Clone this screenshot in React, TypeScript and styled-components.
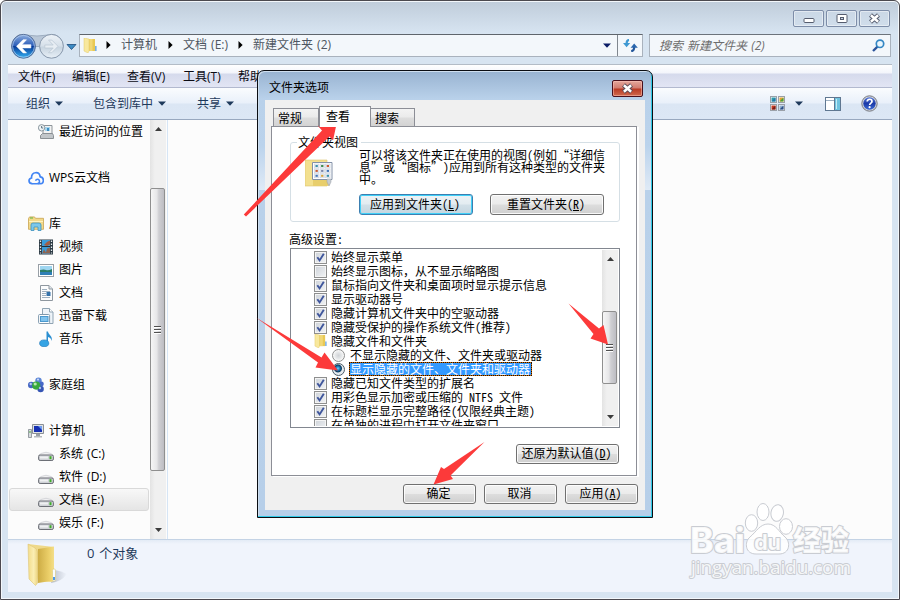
import React from 'react';
import styled, { createGlobalStyle, css } from 'styled-components';

const GlobalStyle = createGlobalStyle`
  *, *::before, *::after { box-sizing: border-box; }
  html, body { margin: 0; padding: 0; }
  body {
    width: 900px;
    height: 600px;
    overflow: hidden;
    background: #fff;
    font-family: "Open Sans", "Noto Sans CJK SC", sans-serif;
    font-size: 12px;
    line-height: 16px;
    word-spacing: 1px;
    color: #000;
  }
  svg { display: block; flex: none; }
`;

/* ---------- Explorer window ---------- */

const Explorer = styled.div`
  position: relative;
  width: 900px;
  height: 600px;
  display: flex;
  flex-direction: column;
  border: 1px solid #4b494f;
  border-radius: 6px 6px 0 0;
  box-shadow: inset 0 0 0 1px #f3f7fb;
  background: linear-gradient(#bfccda 0, #d7e4f1 32px, #d7e4f1 100%);
  padding: 0 7px 7px;
  overflow: hidden;
`;

const Caption = styled.div`
  height: 33px;
  display: flex;
  justify-content: flex-end;
  gap: 2px;
  padding: 9px 2px 0 0;
`;

const CaptionButton = styled.div`
  width: 31px;
  height: 17px;
  display: flex;
  align-items: center;
  justify-content: center;
  border: 1px solid #7d8da8;
  border-radius: 2px;
  box-shadow: inset 0 0 0 1px rgba(255, 255, 255, 0.45);
  background: rgba(205, 219, 233, 0.5);
`;

const NavRow = styled.div`
  height: 30px;
  flex: none;
  display: flex;
  align-items: flex-start;
  padding-right: 1px;
`;

const NavButtons = styled.div`
  width: 71px;
  height: 26px;
  flex: none;
  margin-top: -1px;
`;

const AddressBar = styled.div`
  width: 564px;
  height: 23px;
  display: flex;
  align-items: center;
  border: 1px solid #a9b2bd;
  border-top-color: #5f656c;
  background: #f3f7fb;
  color: #4e5661;
  margin-right: 6px;
`;

const FolderSlot = styled.div`
  width: 26px;
  padding-left: 3px;
`;

const Crumb = styled.div<{ $w: number }>`
  width: ${(p) => p.$w}px;
  display: flex;
  align-items: center;
  gap: 10px;
  white-space: nowrap;
  line-height: 20px;
  padding-bottom: 1px;
`;

const DropSlot = styled.div`
  margin-left: auto;
  width: 14px;
`;

const RefreshSlot = styled.div`
  width: 25px;
  height: 21px;
  display: flex;
  align-items: center;
  justify-content: center;
  border-left: 1px solid #80878f;
`;

const SearchBox = styled.div`
  width: 242px;
  height: 23px;
  display: flex;
  align-items: center;
  justify-content: space-between;
  padding: 0 5px 0 9px;
  border: 1px solid #a9b2bd;
  border-top-color: #6c737b;
  background: #f3f7fb;
  color: #6d6d6d;
  font-style: italic;
`;

const MenuBar = styled.div`
  height: 24px;
  flex: none;
  display: flex;
  align-items: center;
  padding-left: 10px;
  border-top: 1px solid #b3bcc7;
  border-bottom: 1px solid #b2b9cf;
  background: linear-gradient(#ffffff 0, #f3f5fb 8px, #d5daec 9px, #e2e5f4 100%);
`;

const MenuItem = styled.div`
  width: 55px;
  white-space: nowrap;
  color: #0b0b14;
  padding-top: 1px;
  &:nth-child(1) { width: 54px; }
  &:nth-child(3) { width: 56px; }
`;

const Toolbar = styled.div`
  height: 32px;
  flex: none;
  display: flex;
  align-items: center;
  padding: 0 14px 0 18px;
  border-bottom: 1px solid #98a8bf;
  background: linear-gradient(#fafcfe 0, #e9f0fa 15px, #dbe6f4 16px, #dce7f5 100%);
  color: #1e395b;
`;

const ToolItem = styled.div<{ $gap: number }>`
  display: flex;
  align-items: center;
  gap: 5px;
  margin-right: ${(p) => p.$gap}px;
`;

const ToolRight = styled.div`
  margin-left: auto;
  display: flex;
  align-items: center;
`;

const Spacer = styled.div<{ $w: number }>`
  width: ${(p) => p.$w}px;
`;

const Body = styled.div`
  height: 419px;
  flex: none;
  display: flex;
  background: #fcfcfc;
`;

const Sidebar = styled.div`
  width: 142px;
  flex: none;
  overflow: hidden;
`;

const TreeRow = styled.div<{ $level: number; $active?: boolean }>`
  height: 23px;
  width: 140px;
  margin-left: 1px;
  display: flex;
  align-items: center;
  padding-left: ${(p) => (p.$level === 2 ? 28 : 18)}px;
  gap: 5px;
  border: 1px solid transparent;
  border-radius: 3px;
  white-space: nowrap;
  ${(p) =>
    p.$active &&
    css`
      border-color: #d9d9d9;
      background: linear-gradient(#f8f8f8, #e5e5e5);
    `}
`;

const ScrollTrack = styled.div`
  width: 16px;
  flex: none;
  display: flex;
  flex-direction: column;
  align-items: center;
  background: linear-gradient(90deg, #e3e3e3, #f0f0f0 30%, #f0f0f0);
`;

const ScrollEnd = styled.div<{ $h: number; $down?: boolean }>`
  height: ${(p) => p.$h}px;
  display: flex;
  align-items: ${(p) => (p.$down ? 'flex-end' : 'flex-start')};
  padding: 7px 0;
`;

const ScrollThumb = styled.div<{ $h: number }>`
  width: 15px;
  height: ${(p) => p.$h}px;
  align-self: flex-start;
  display: flex;
  align-items: center;
  justify-content: center;
  border: 1px solid #8f8f8f;
  border-radius: 2px;
  background: linear-gradient(90deg, #f6f6f6 0, #e6e6e8 45%, #cfcfd3 60%, #bdbdc3 100%);
`;

const FileArea = styled.div`
  flex: 1;
  margin-left: 1px;
  border-left: 1px solid #d6e5f5;
`;

const StatusBar = styled.div`
  height: 53px;
  flex: none;
  display: flex;
  padding: 3px 0 0 19px;
  border-top: 1px solid #c4d3e5;
  background: linear-gradient(#e3ebf6 0, #f0f4fc 4px, #f0f4fc 100%);
  color: #1e395b;
  font-size: 13px;
  line-height: 20px;
`;

const StatusText = styled.div`
  margin-left: 18px;
  word-spacing: 1.5px;
`;

/* ---------- Folder options dialog ---------- */

const Dialog = styled.div`
  position: absolute;
  left: 256px;
  top: 69px;
  width: 396px;
  height: 448px;
  padding: 0 7px 7px;
  display: flex;
  flex-direction: column;
  word-spacing: 0;
  border: 1px solid #0a0d12;
  border-radius: 7px 7px 0 0;
  box-shadow: inset -1px -1px 0 #2fc9e6, inset 1px 1px 0 #cfdfef;
  background:
    linear-gradient(#b9d1ea, #b7cfe9) 0 119px / 100% 328px no-repeat,
    linear-gradient(#98b3d1 0, #b9d1ea 28px, #bbd3ec 75px, #dfeaf6 119px);
`;

const DialogTitle = styled.div`
  height: 29px;
  flex: none;
  display: flex;
  justify-content: space-between;
  padding: 9px 2px 0 4px;
`;

const CloseButton = styled.div`
  width: 31px;
  height: 17px;
  display: flex;
  align-items: center;
  justify-content: center;
  border: 1px solid #48101c;
  border-radius: 2px;
  box-shadow: inset 0 0 0 1px rgba(255, 200, 190, 0.5);
  background: linear-gradient(#e3a79c 0, #d27c70 7px, #b93a24 8px, #cf6a4e 100%);
`;

const Client = styled.div`
  width: 380px;
  height: 410px;
  padding: 6px 6px 0;
  background: #f0f0f0;
  font-family: "Noto Sans CJK SC", sans-serif;
  font-feature-settings: "hwid" 1;
  line-height: 14px;
`;

const FullWidth = styled.span`
  font-feature-settings: normal;
`;

const Tabs = styled.div`
  height: 20px;
  display: flex;
  align-items: flex-end;
  padding-left: 2px;
`;

const Tab = styled.div<{ $w: number; $active?: boolean }>`
  width: ${(p) => p.$w}px;
  height: 18px;
  padding: 2px 0 0 4px;
  border: 1px solid #8c8e96;
  border-bottom: 0;
  border-left-width: ${(p) => (p.$w === 44 ? 0 : 1)}px;
  background: linear-gradient(#f3f3f3 0, #ebebeb 8px, #dddddd 9px, #d3d3d3 100%);
  ${(p) =>
    p.$active &&
    css`
      height: 21px;
      margin-bottom: -1px;
      padding-left: 6px;
      background: #fff;
      z-index: 1;
    `}
`;

const Panel = styled.div`
  width: 366px;
  height: 350px;
  padding: 15px 17px 0 18px;
  border: 1px solid #8c8e96;
  box-shadow: 2px 2px 0 -1px #fff, 2px 1px 0 #fff;
  background: #fff;
`;

const Group = styled.div`
  width: 330px;
  height: 80px;
  border: 1px solid #d5dfe5;
  border-radius: 3px;
`;

const GroupLabel = styled.div`
  width: 64px;
  margin: -8px 0 0 6px;
  padding-left: 1px;
  background: #fff;
  height: 14px;
`;

const GroupBody = styled.div`
  display: flex;
  padding: 0 0 0 14px;
`;

const GroupIcon = styled.div`
  width: 28px;
  padding-top: 10px;
`;

const GroupText = styled.div`
  width: 256px;
  margin-left: 26px;
`;

const Paragraph = styled.div`
  line-height: 12px;
  white-space: pre;
  height: 45px;
`;

const ButtonRow = styled.div<{ $gap: number; $pad?: string }>`
  display: flex;
  justify-content: flex-end;
  gap: ${(p) => p.$gap}px;
  padding: ${(p) => p.$pad ?? '0'};
`;

const Button = styled.div<{ $w: number; $h?: number; $focus?: boolean }>`
  width: ${(p) => p.$w}px;
  height: ${(p) => p.$h ?? 20}px;
  display: flex;
  align-items: center;
  justify-content: center;
  padding: 0 2px 2px 0;
  white-space: nowrap;
  border: 1px solid #707070;
  border-radius: 3px;
  box-shadow: inset 0 0 0 1px rgba(255, 255, 255, 0.85);
  background: linear-gradient(#f2f2f2 0, #ebebeb 48%, #dddddd 52%, #cfcfcf 100%);
  ${(p) =>
    p.$focus &&
    css`
      border-color: #3c7fb1;
      box-shadow: inset 0 0 0 1px #40d0f8;
      background: linear-gradient(#edf3f6 0, #e3ecf1 48%, #d2e0e8 52%, #c4d6e0 100%);
    `}
`;

const Key = styled.span`
  text-decoration: underline;
  text-underline-offset: 1px;
`;

const SectionLabel = styled.div`
  margin: 10px 0 2px -1px;
  height: 14px;
`;

const ListBox = styled.div`
  width: 330px;
  height: 180px;
  display: flex;
  border: 1px solid #828790;
  background: #fff;
  overflow: hidden;
  padding: 1px;
`;

const List = styled.div`
  width: 311px;
  height: 176px;
  overflow: hidden;
`;

const Option = styled.div<{ $indent: number }>`
  height: 14px;
  display: flex;
  align-items: center;
  gap: 4px;
  padding-left: ${(p) => p.$indent}px;
  white-space: pre;
`;

const OptionText = styled.span<{ $selected?: boolean }>`
  height: 14px;
  line-height: 14px;
  ${(p) =>
    p.$selected &&
    css`
      line-height: 12px;
      margin-left: -1px;
      padding-right: 1px;
      color: #fff;
      background: #3399ff;
      border: 1px solid #cc6600;
      outline: 1px dotted #1c1206;
      outline-offset: -1px;
    `}
`;

const Check = styled.div`
  width: 13px;
  height: 13px;
  flex: none;
  border: 1px solid #8e8f8f;
  box-shadow: inset 0 0 0 1px #f4f4f4;
  background: linear-gradient(135deg, #cdd2d8, #f2f4f6);
`;

const Radio = styled.div<{ $on: boolean }>`
  width: 13px;
  height: 13px;
  flex: none;
  margin-left: -1px;
  margin-right: 1px;
  border-radius: 50%;
  border: 1px solid ${(p) => (p.$on ? '#4b5a66' : '#8e8f8f')};
  background: ${(p) =>
    p.$on
      ? 'radial-gradient(circle at 45% 40%, #7fd6f8 0, #1c78b4 2px, #0d3a5e 3.5px, #e4eaee 4.5px)'
      : 'radial-gradient(circle at 50% 50%, #d0d3d6 0, #e4e6e8 3px, #f6f6f6 5px)'};
`;

const Overlay = styled.div`
  position: absolute;
  left: -1px;
  top: -1px;
  width: 900px;
  height: 600px;
  pointer-events: none;
`;

/* ---------- Small drawings ---------- */

const Caret = ({ fill = '#1e395b' }: { fill?: string }) => (
  <svg width="8" height="5" viewBox="0 0 8 5"><path d="M0 .5h8L4 4.7z" fill={fill} /></svg>
);

const CrumbArrow = () => (
  <svg width="5" height="8" viewBox="0 0 5 8"><path d="M.5 0v8L4.6 4z" fill="#000" /></svg>
);

const ScrollArrow = ({ down }: { down?: boolean }) => (
  <svg width="7" height="4" viewBox="0 0 7 4">
    <path d={down ? 'M0 0h7L3.5 4z' : 'M0 4h7L3.5 0z'} fill="#3c3c3c" />
  </svg>
);

const Grip = () => (
  <svg width="7" height="9" viewBox="0 0 7 9" shapeRendering="crispEdges">
    <path d="M0 1h7v1H0zM0 4h7v1H0zM0 7h7v1H0z" fill="#505050" />
    <path d="M0 2h7v1H0zM0 5h7v1H0zM0 8h7v1H0z" fill="#fff" />
  </svg>
);

const Cross = ({ stroke }: { stroke: string }) => (
  <svg width="13" height="11" viewBox="0 0 13 11">
    <path d="M2.500 2l8 7M10.500 2l-8 7" stroke={stroke} strokeWidth="4.400" />
    <path d="M2.900 2.300l7.200 6.400M10.100 2.300l-7.200 6.400" stroke="#fff" strokeWidth="2.500" />
  </svg>
);

const MinGlyph = () => (
  <svg width="12" height="11" viewBox="0 0 12 11"><rect x="1" y="5.500" width="10" height="4" rx="1" fill="#fff" stroke="#555c6e" /></svg>
);

const MaxGlyph = () => (
  <svg width="12" height="9" viewBox="0 0 12 9">
    <rect x="1" y=".5" width="10" height="8" rx="1" fill="#fff" stroke="#555c6e" />
    <rect x="4.500" y="3.500" width="3" height="2" fill="#c6d3e0" stroke="#555c6e" />
  </svg>
);

const NavGlyphs = () => (
  <svg width="71" height="26" viewBox="8 33 71 26">
    <defs>
      <linearGradient id="navBack" x1="0" y1="0" x2="0" y2="1">
        <stop offset="0" stopColor="#8eaede" /><stop offset=".48" stopColor="#2a5cb8" />
        <stop offset=".5" stopColor="#083a98" /><stop offset="1" stopColor="#35b4f4" />
      </linearGradient>
      <linearGradient id="navFwd" x1="0" y1="0" x2="0" y2="1">
        <stop offset="0" stopColor="#eef3f8" /><stop offset=".5" stopColor="#d5dfe9" />
        <stop offset=".52" stopColor="#c6d3df" /><stop offset="1" stopColor="#e8f0f7" />
      </linearGradient>
    </defs>
    <path d="M20 34.500q17 3 34 0a12 12 0 0 1 9 12H12a12 12 0 0 1 8-12z" fill="#b9c7d7" stroke="#9dadc0" />
    <circle cx="23.500" cy="46.300" r="11.900" fill="url(#navBack)" stroke="#566f98" />
    <circle cx="23.500" cy="46.300" r="10.900" fill="none" stroke="#b9d2f2" strokeOpacity=".7" />
    <path d="M16.500 46.300l6.600-6.600h3.400l-4.600 5h9v3.200h-9l4.600 5h-3.400z" fill="#fff" stroke="#fff" strokeWidth=".6" />
    <circle cx="51.500" cy="46.300" r="11.900" fill="url(#navFwd)" stroke="#8797ab" />
    <path d="M58 46.300l-6.200-6.200h-3.200l4.600 4.900h-8.400v3h8.400l-4.600 4.700h3.200z" fill="#e8eef4" stroke="#bdc9d5" strokeWidth=".8" />
    <path d="M67 44.500h9l-4.500 5z" fill="#3c8bc4" stroke="#1d4b7c" strokeWidth=".8" />
  </svg>
);

const SmallFolder = ({ size = 14 }: { size?: number }) => (
  <svg width={size} height={size + 1} viewBox="0 0 14 15">
    <path d="M5 1h7v12H5z" fill="#e9c955" />
    <path d="M1 0l5 1v12l-1 2-4-2z" fill="#f8e89d" stroke="#e3c968" strokeWidth=".5" />
    <path d="M6.500 1h3v12h-3z" fill="#f1d878" />
    <path d="M12 8h1.600v5H12z" fill="#77aee6" />
  </svg>
);

const RefreshGlyph = () => (
  <svg width="15" height="13" viewBox="0 0 15 13">
    <path d="M6 1Q3.600 1.200 3.600 4.600" fill="none" stroke="#3d98d2" strokeWidth="2.200" />
    <path d="M0 4h7.200L3.600 8.200z" fill="#3d98d2" />
    <path d="M8.200 12.200q3-.4 3-4.500" fill="none" stroke="#23569a" strokeWidth="2.200" />
    <path d="M7.600 8.800h7.200l-3.600-4.400z" fill="#2a66ad" />
  </svg>
);

const Magnifier = () => (
  <svg width="13" height="13" viewBox="0 0 13 13">
    <path d="M6 7.200L1 12" stroke="#2b539a" strokeWidth="2.400" />
    <circle cx="8" cy="4.800" r="3.700" fill="#eaf6fd" stroke="#3487c4" strokeWidth="1.700" />
  </svg>
);

const ViewsGlyph = () => (
  <svg width="15" height="15" viewBox="0 0 15 15">
    {[[0, 0, '#2e9cab', '#2277a8'], [8, 0, '#dfa132', '#4aa03c'], [0, 8, '#c8391e', '#751d1a'], [8, 8, '#8fb0cf', '#2d4f86']].map(
      ([x, y, a, b]) => (
        <g key={`${x}-${y}`}>
          <rect x={Number(x) + 0.5} y={Number(y) + 0.5} width="6" height="6" fill="#fff" stroke="#9aa0a8" />
          <path d={`M${Number(x) + 1.5} ${Number(y) + 1.5}h4v4h-4z`} fill={String(a)} />
          <path d={`M${Number(x) + 1.5} ${Number(y) + 5.5}l4-4v4z`} fill={String(b)} />
        </g>
      ),
    )}
  </svg>
);

const PaneGlyph = () => (
  <svg width="16" height="14" viewBox="0 0 16 14">
    <rect x=".5" y=".5" width="15" height="13" fill="#fff" stroke="#5f7791" />
    <path d="M1 3.500h9" stroke="#9db0c2" /><rect x="10" y="1" width="5" height="12" fill="#6fc3df" />
    <path d="M9.500 1v12" stroke="#5f7791" /><path d="M11.500 2v10" stroke="#c5ecf6" />
  </svg>
);

const HelpGlyph = () => (
  <svg width="17" height="17" viewBox="0 0 17 17">
    <defs>
      <linearGradient id="helpBlue" x1="0" y1="0" x2="0" y2="1">
        <stop offset="0" stopColor="#5a7bd8" /><stop offset=".5" stopColor="#1b3aa8" /><stop offset="1" stopColor="#3b6ad4" />
      </linearGradient>
    </defs>
    <circle cx="8.500" cy="8.500" r="7.700" fill="#d0d3da" stroke="#777a82" />
    <circle cx="8.500" cy="8.500" r="6.200" fill="url(#helpBlue)" />
    <path d="M6.200 6.600c0-3.200 4.800-3 4.800-.2 0 1.800-2.300 1.700-2.300 3.600" fill="none" stroke="#fff" strokeWidth="1.700" />
    <circle cx="8.600" cy="12.200" r="1.100" fill="#fff" />
  </svg>
);

type IconName =
  | 'recent' | 'cloud' | 'library' | 'video' | 'picture' | 'doc' | 'download'
  | 'music' | 'home' | 'computer' | 'drive';

const icons: Record<IconName, React.ReactNode> = {
  recent: (
    <>
      <path d="M5 1.500h9v9H5z" fill="#f3f3f3" stroke="#8d9499" />
      <path d="M7 3h5v4H7z" fill="#a8d6ee" /><path d="M9 4h2v3H9z" fill="#3c8fc5" />
      <path d="M2.500 11.500l2-2h10l1 2v3h-13z" fill="#c2c6c9" stroke="#8b9094" />
      <circle cx="3.600" cy="3.800" r="3.200" fill="#eff3f5" stroke="#8a979f" />
      <path d="M3.600 2v2h1.600" fill="none" stroke="#4f6877" strokeWidth=".9" />
    </>
  ),
  cloud: (
    <>
      <path d="M4.200 13.700C.4 13.700-.1 8.800 3.500 8 3.300 1.400 11.400 1 12.200 6.800c4 .2 4.300 6.900.4 6.900H9.800" fill="none" stroke="#4285f4" strokeWidth="1.700" />
      <path d="M3.800 13.700h5.400c3 0 3-4.400.4-4.400-1 0-1.800.6-2 1.400" fill="none" stroke="#4285f4" strokeWidth="1.500" />
    </>
  ),
  library: (
    <>
      <path d="M.5 2.500l1-1.600h5l1 1.400h8v11H.5z" fill="#f2d98a" stroke="#c9a550" strokeWidth=".8" />
      <path d="M1 5h14v1H1z" fill="#fff3c0" /><path d="M2 1.400h3v1H2z" fill="#5bb545" />
      <path d="M3 14.500V9q0-2 2-2h6q2 0 2 2v5.500h-3V11H6v3.500z" fill="#7cc8ea" stroke="#3d92be" strokeWidth=".8" />
    </>
  ),
  video: (
    <>
      <path d="M1 .5h14v15H1z" fill="#2c3a44" /><path d="M4 1h8v14H4z" fill="#3b9cd8" />
      <path d="M9 3l3-1.500v4L9 7 6 6z" fill="#a35d42" /><path d="M4 14.500l2-4 2 3 1-4 3-1v6z" fill="#8f6450" />
      <path d="M4 7.500h8" stroke="#20303a" />
      <path d="M2.500 1.500v13M13.500 1.500v13" stroke="#e7eef2" strokeWidth="1.300" strokeDasharray="1.500 1.500" />
    </>
  ),
  picture: (
    <>
      <rect x=".5" y="2.500" width="15" height="12" fill="#fff" stroke="#989fa6" />
      <path d="M2 4h12v9H2z" fill="#9fd6f1" /><path d="M2 8q4-1 6 0t6-1v3H2z" fill="#2b7d68" />
      <path d="M2 10h12v3H2z" fill="#2f7fb6" />
    </>
  ),
  doc: (
    <>
      <path d="M2.500.500H11L14.500 4v11.500h-12z" fill="#fbfcfd" stroke="#8e979f" />
      <path d="M11 .5V4h3.500" fill="#dfe6ec" stroke="#8e979f" />
      <path d="M4 4.500h5M4 6.500h8M4 8.500h4M4 10.500h4M4 12.500h8" stroke="#9fb0bf" />
      <path d="M8.500 7h4v4h-4z" fill="#3573ab" />
    </>
  ),
  download: (
    <>
      <path d="M4.500.500h7L15 4v11.500H4.500z" fill="#eef4f9" stroke="#90a4b3" />
      <path d="M11.500.5V4H15" fill="#fff" stroke="#90a4b3" />
      <rect x=".6" y="6.500" width="11" height="9" rx="1" fill="#fff" stroke="#7f99ad" />
      <rect x="2.500" y="8.500" width="7.500" height="5" fill="#7fc3ee" stroke="#4b98cd" />
    </>
  ),
  music: (
    <>
      <path d="M8.500.5H10c.4 3.400 5.200 4.500 3.600 9.600-.2-2.700-1.800-3.800-3.600-4.200V13H8.500z" fill="#2b8fd1" />
      <ellipse cx="6.200" cy="12.300" rx="4.600" ry="3.400" fill="#36a4e4" stroke="#1b74b5" strokeWidth=".6" />
    </>
  ),
  home: (
    <>
      <circle cx="3.200" cy="8" r="3.200" fill="#4467c4" /><circle cx="10.500" cy="3.600" r="3.200" fill="#5d86d6" />
      <circle cx="12.600" cy="12" r="3.200" fill="#3655b4" /><circle cx="13.400" cy="7" r="2.400" fill="#4668c8" />
      <circle cx="8.200" cy="8.600" r="4.100" fill="#38a83d" /><circle cx="7.200" cy="7" r="1.600" fill="#b6e8ae" />
      <circle cx="2.700" cy="7" r="1.200" fill="#b8c8f0" /><circle cx="12" cy="11" r="1.200" fill="#a8bcec" />
      <circle cx="10" cy="2.600" r="1.100" fill="#c4d5f4" />
    </>
  ),
  computer: (
    <>
      <path d="M.5 6.500h3v8h-3z" fill="#d6dade" stroke="#82898f" strokeWidth=".8" /><path d="M1 9h2" stroke="#4ca640" />
      <path d="M4.500 1.500h11v9h-11z" fill="#dfe2e6" stroke="#8b9095" />
      <path d="M6 3h8v6H6z" fill="#1630b2" /><path d="M10 3h4v4z" fill="#6f9df0" />
      <path d="M8 11h4v2H8z" fill="#9aa0a5" /><path d="M6 13h8v1.500H6z" fill="#b4b9bd" />
    </>
  ),
  drive: (
    <>
      <path d="M3 7.500q5-2.500 10 0l2.500 2H.5z" fill="#f0f0f2" stroke="#c3c5c9" strokeWidth=".6" />
      <rect x=".6" y="9" width="14.800" height="5.500" rx="1.500" fill="#cfd1d6" stroke="#6c6f76" />
      <path d="M2 10.500h8v2H2z" fill="#eff0f2" /><path d="M11.500 10.200h2v3h-2z" fill="#3fae2a" />
    </>
  ),
};

const TreeIcon = ({ name }: { name: IconName }) => (
  <svg width="16" height="16" viewBox="0 0 16 16">{icons[name]}</svg>
);

const OpenFolder = () => (
  <svg width="42" height="44" viewBox="0 0 42 44">
    <defs>
      <linearGradient id="folderBack" x1="0" x2="1"><stop offset="0" stopColor="#cdac45" /><stop offset=".7" stopColor="#ecd06a" /><stop offset="1" stopColor="#f3de8a" /></linearGradient>
      <linearGradient id="folderFront" x1="0" x2="1"><stop offset="0" stopColor="#f3dc8a" /><stop offset=".6" stopColor="#fbeeb4" /><stop offset="1" stopColor="#ecd481" /></linearGradient>
      <linearGradient id="folderShade" x1="0" x2="1"><stop offset="0" stopColor="#a9b0bd" /><stop offset="1" stopColor="#f0f4fc" /></linearGradient>
    </defs>
    <path d="M24 40q10-1 16-9-6-3-12-4z" fill="url(#folderShade)" opacity=".8" />
    <path d="M1 1l26 3v33l-2 2-14-1z" fill="#efd98a" />
    <path d="M11 6l16-2.500v34L11 40z" fill="url(#folderBack)" />
    <path d="M1 1l7 4q2 1 2.500 4v31l-2 2.500L2 36z" fill="url(#folderFront)" stroke="#dec679" strokeWidth=".6" />
    <rect x="25.500" y="26" width="3" height="12" rx="1.200" fill="#f7fbff" stroke="#d9c260" strokeWidth=".5" />
    <path d="M26 34h2v3h-2z" fill="#4e9be8" />
  </svg>
);

const ViewFolder = () => (
  <svg width="28" height="28" viewBox="0 0 28 28">
    <path d="M0 1h22v26H0z" fill="#f3e08f" stroke="#dcc46e" strokeWidth=".6" />
    <path d="M8 20h17v6l-3 1H8z" fill="#e8ce6c" />
    <path d="M7.500 3.500h19.500v17h-19.500z" fill="#fff" stroke="#8391a8" />
    {[0, 1, 2].map((r) =>
      [0, 1, 2].map((c) => (
        <g key={`${r}${c}`}>
          <rect x={9.500 + c * 5.600} y={5 + r * 4.900} width="4.400" height="4" fill="#e9eef5" stroke="#c3cbd6" strokeWidth=".5" />
          <rect x={10.500 + c * 5.600} y={6 + r * 4.900} width="2.300" height="2" fill={['#3a8fa8', '#3e8a4e', '#c95a32', '#7b86a8', '#4273b5', '#d9a43a'][(r * 2 + c) % 6]} />
        </g>
      )),
    )}
    <path d="M22 20h4v3l-2 4-2-4z" fill="#c6ccd2" stroke="#969da4" strokeWidth=".5" />
  </svg>
);

const CheckBox = ({ on }: { on: boolean }) => (
  <Check>
    {on && (
      <svg width="11" height="11" viewBox="0 0 11 11">
        <path d="M2.300 5.200L4.600 8.400 8.800 1.800" fill="none" stroke="#3f569c" strokeWidth="1.900" />
      </svg>
    )}
  </Check>
);

const Marks = () => (
  <svg width="900" height="600" viewBox="0 0 900 600">
    <g fill="#fc3a3a">
      <path d="M337.500 119.500L318 126 322 130.500 243.800 214.500 246 216.500 329.500 136.500 333 140.500z" />
      <path d="M256 317.500L321.500 357.500 324.500 352.500 338 370.500 315.500 367.500 318 362.500z" />
      <path d="M568.500 303.500L599 328.500 603.500 325 608 344.500 590.500 338.500 593.500 334z" />
      <path d="M484.500 442L450.500 475.500 453 479 433.500 484.500 441 467 444 469z" />
    </g>
    <g fill="#fff" fillOpacity=".85" stroke="#c9ccd2" strokeWidth="1">
      <ellipse cx="751.500" cy="523" rx="6.200" ry="8.300" />
      <ellipse cx="763" cy="512" rx="6" ry="8.500" />
      <ellipse cx="777.200" cy="513" rx="6.200" ry="8.300" transform="rotate(10 777 513)" />
      <ellipse cx="786" cy="526.500" rx="6.500" ry="7.800" />
      <path d="M768 524c8 0 11 8 17 13s5 17-6 17h-23c-11 0-12-12-6-17s10-13 18-13z" />
      <g strokeWidth="2" paintOrder="stroke" strokeLinejoin="round">
        <text x="690" y="553" fontFamily="Inter, sans-serif" fontWeight="800" fontSize="35" textLength="55" lengthAdjust="spacingAndGlyphs">Bai</text>
        <text x="754" y="550" fontFamily="Inter, sans-serif" fontWeight="700" fontSize="22" textLength="27">du</text>
        <text x="793" y="551" fontFamily="Noto Sans CJK SC, sans-serif" fontWeight="900" fontSize="28" textLength="56">经验</text>
        <text x="691" y="574" fontFamily="Open Sans, sans-serif" fontWeight="400" fontSize="19" textLength="160">jingyan.baidu.com</text>
      </g>
    </g>
  </svg>
);

/* ---------- Data ---------- */

type TreeEntry = { icon: IconName; label: string; level: number; active?: boolean } | null;

const tree: TreeEntry[] = [
  { icon: 'recent', label: '最近访问的位置', level: 2 },
  null,
  { icon: 'cloud', label: 'WPS云文档', level: 1 },
  null,
  { icon: 'library', label: '库', level: 1 },
  { icon: 'video', label: '视频', level: 2 },
  { icon: 'picture', label: '图片', level: 2 },
  { icon: 'doc', label: '文档', level: 2 },
  { icon: 'download', label: '迅雷下载', level: 2 },
  { icon: 'music', label: '音乐', level: 2 },
  null,
  { icon: 'home', label: '家庭组', level: 1 },
  null,
  { icon: 'computer', label: '计算机', level: 1 },
  { icon: 'drive', label: '系统 (C:)', level: 2 },
  { icon: 'drive', label: '软件 (D:)', level: 2 },
  { icon: 'drive', label: '文档 (E:)', level: 2, active: true },
  { icon: 'drive', label: '娱乐 (F:)', level: 2 },
];

type OptionEntry = { kind: 'check' | 'radio' | 'folder'; label: React.ReactNode; on?: boolean };

const options: OptionEntry[] = [
  { kind: 'check', label: '始终显示菜单', on: true },
  { kind: 'check', label: <>始终显示图标<FullWidth>，</FullWidth>从不显示缩略图</> },
  { kind: 'check', label: '鼠标指向文件夹和桌面项时显示提示信息', on: true },
  { kind: 'check', label: '显示驱动器号', on: true },
  { kind: 'check', label: '隐藏计算机文件夹中的空驱动器', on: true },
  { kind: 'check', label: '隐藏受保护的操作系统文件(推荐)', on: true },
  { kind: 'folder', label: '隐藏文件和文件夹' },
  { kind: 'radio', label: '不显示隐藏的文件、文件夹或驱动器' },
  { kind: 'radio', label: '显示隐藏的文件、文件夹和驱动器', on: true },
  { kind: 'check', label: '隐藏已知文件类型的扩展名', on: true },
  { kind: 'check', label: '用彩色显示加密或压缩的 NTFS 文件', on: true },
  { kind: 'check', label: '在标题栏显示完整路径(仅限经典主题)', on: true },
  { kind: 'check', label: '在单独的进程中打开文件夹窗口' },
];

const indents = { check: 22, folder: 22, radio: 41 };

/* ---------- Composition ---------- */

const FolderOptions = () => (
  <Dialog>
    <DialogTitle>
      文件夹选项
      <CloseButton><Cross stroke="#5a4a55" /></CloseButton>
    </DialogTitle>
    <Client>
      <Tabs>
        <Tab $w={46}>常规</Tab>
        <Tab $w={52} $active>查看</Tab>
        <Tab $w={44}>搜索</Tab>
      </Tabs>
      <Panel>
        <Group>
          <GroupLabel>文件夹视图</GroupLabel>
          <GroupBody>
            <GroupIcon><ViewFolder /></GroupIcon>
            <GroupText>
              <Paragraph>{'可以将该文件夹正在使用的视图(例如“详细信\n息”或“图标”)应用到所有这种类型的文件夹\n中。'}</Paragraph>
              <ButtonRow $gap={17} $pad="0 11px 0 0">
                <Button $w={114} $h={21} $focus>应用到文件夹(<Key>L</Key>)</Button>
                <Button $w={114} $h={21}>重置文件夹(<Key>R</Key>)</Button>
              </ButtonRow>
            </GroupText>
          </GroupBody>
        </Group>
        <SectionLabel>高级设置:</SectionLabel>
        <ListBox>
          <List>
            {options.map((o, i) => (
              <Option key={i} $indent={indents[o.kind]}>
                {o.kind === 'check' && <CheckBox on={!!o.on} />}
                {o.kind === 'folder' && <SmallFolder size={13} />}
                {o.kind === 'radio' && <Radio $on={!!o.on} />}
                <OptionText $selected={o.kind === 'radio' && o.on}>{o.label}</OptionText>
              </Option>
            ))}
          </List>
          <ScrollTrack>
            <ScrollEnd $h={61}><ScrollArrow /></ScrollEnd>
            <ScrollThumb $h={73}><Grip /></ScrollThumb>
            <ScrollEnd $h={42} $down><ScrollArrow down /></ScrollEnd>
          </ScrollTrack>
        </ListBox>
        <ButtonRow $gap={0} $pad="16px 0 0">
          <Button $w={103}>还原为默认值(<Key>D</Key>)</Button>
        </ButtonRow>
      </Panel>
      <ButtonRow $gap={8} $pad="8px 1px 0 0">
        <Button $w={73}>确定</Button>
        <Button $w={73}>取消</Button>
        <Button $w={73}>应用(<Key>A</Key>)</Button>
      </ButtonRow>
    </Client>
  </Dialog>
);

export default function App() {
  return (
    <>
      <GlobalStyle />
      <Explorer>
        <Caption>
          <CaptionButton><MinGlyph /></CaptionButton>
          <CaptionButton><MaxGlyph /></CaptionButton>
          <CaptionButton><Cross stroke="#555c6e" /></CaptionButton>
        </Caption>
        <NavRow>
          <NavButtons><NavGlyphs /></NavButtons>
          <AddressBar>
            <FolderSlot><SmallFolder /></FolderSlot>
            <Crumb $w={62}><CrumbArrow />计算机</Crumb>
            <Crumb $w={70}><CrumbArrow />文档 (E:)</Crumb>
            <Crumb $w={100}><CrumbArrow />新建文件夹 (2)</Crumb>
            <DropSlot><Caret fill="#0a1c66" /></DropSlot>
            <RefreshSlot><RefreshGlyph /></RefreshSlot>
          </AddressBar>
          <SearchBox>搜索 新建文件夹 (2)<Magnifier /></SearchBox>
        </NavRow>
        <MenuBar>
          {['文件(F)', '编辑(E)', '查看(V)', '工具(T)', '帮助'].map((m) => (
            <MenuItem key={m}>{m}</MenuItem>
          ))}
        </MenuBar>
        <Toolbar>
          <ToolItem $gap={30}>组织<Caret /></ToolItem>
          <ToolItem $gap={31}>包含到库中<Caret /></ToolItem>
          <ToolItem $gap={0}>共享<Caret /></ToolItem>
          <ToolRight>
            <ViewsGlyph />
            <Spacer $w={10} />
            <Caret />
            <Spacer $w={22} />
            <PaneGlyph />
            <Spacer $w={20} />
            <HelpGlyph />
          </ToolRight>
        </Toolbar>
        <Body>
          <Sidebar>
            {tree.map((t, i) =>
              t ? (
                <TreeRow key={i} $level={t.level} $active={t.active}>
                  <TreeIcon name={t.icon} />
                  {t.label}
                </TreeRow>
              ) : (
                <TreeRow key={i} $level={1} />
              ),
            )}
          </Sidebar>
          <ScrollTrack>
            <ScrollEnd $h={68}><ScrollArrow /></ScrollEnd>
            <ScrollThumb $h={283}><Grip /></ScrollThumb>
            <ScrollEnd $h={68} $down><ScrollArrow down /></ScrollEnd>
          </ScrollTrack>
          <FileArea />
        </Body>
        <StatusBar>
          <OpenFolder />
          <StatusText>0 个对象</StatusText>
        </StatusBar>
        <FolderOptions />
        <Overlay><Marks /></Overlay>
      </Explorer>
    </>
  );
}
